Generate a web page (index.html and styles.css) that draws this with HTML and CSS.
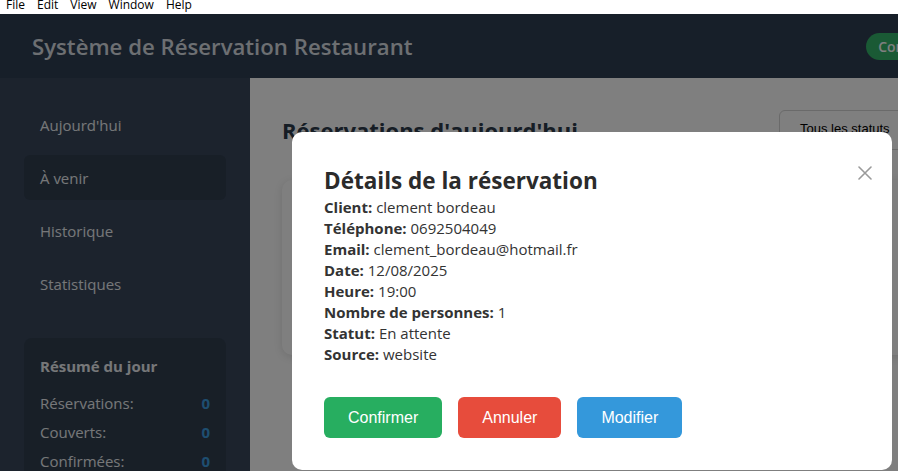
FILE: index.html
```html
<!DOCTYPE html>
<html lang="fr">
<head>
<meta charset="utf-8">
<title>Système de Réservation Restaurant</title>
<link rel="stylesheet" href="styles.css">
</head>
<body>
<div class="menubar">
  <span class="menu-item">File</span>
  <span class="menu-item">Edit</span>
  <span class="menu-item">View</span>
  <span class="menu-item">Window</span>
  <span class="menu-item">Help</span>
</div>
<div class="app">
  <header class="topbar">
    <h1 class="app-title">Système de Réservation Restaurant</h1>
    <div class="topbar-right">
      <span class="status-pill">Connecté</span>
      <span class="topbar-date">12/08/2025</span>
    </div>
  </header>
  <div class="layout">
    <aside class="sidebar">
      <nav class="nav">
        <div class="nav-item">Aujourd'hui</div>
        <div class="nav-item active">À venir</div>
        <div class="nav-item">Historique</div>
        <div class="nav-item">Statistiques</div>
      </nav>
      <section class="summary">
        <h3 class="summary-title">Résumé du jour</h3>
        <div class="summary-row"><span>Réservations:</span><span class="num">0</span></div>
        <div class="summary-row"><span>Couverts:</span><span class="num">0</span></div>
        <div class="summary-row"><span>Confirmées:</span><span class="num">0</span></div>
        <div class="summary-row"><span>En attente:</span><span class="num">0</span></div>
      </section>
    </aside>
    <main class="main">
      <div class="main-head">
        <h2 class="main-title">Réservations d'aujourd'hui</h2>
        <div class="filters">
          <div class="select">Tous les statuts</div>
          <div class="select date">12/08/2025</div>
          <div class="btn-refresh">Actualiser</div>
        </div>
      </div>
      <div class="card">
        <p class="empty">Aucune réservation pour aujourd'hui</p>
      </div>
    </main>
  </div>
</div>
<div class="overlay">
  <div class="modal">
    <div class="modal-head">
      <h2 class="modal-title">Détails de la réservation</h2>
      <svg class="close" width="14" height="14" viewBox="0 0 14 14" aria-hidden="true">
        <path d="M1 1 L13 13 M13 1 L1 13" stroke="#9a9a9a" stroke-width="1.6" stroke-linecap="round"/>
      </svg>
    </div>
    <div class="details">
      <div><b>Client:</b> clement bordeau</div>
      <div><b>Téléphone:</b> 0692504049</div>
      <div><b>Email:</b> clement_bordeau@hotmail.fr</div>
      <div><b>Date:</b> 12/08/2025</div>
      <div><b>Heure:</b> 19:00</div>
      <div><b>Nombre de personnes:</b> 1</div>
      <div><b>Statut:</b> En attente</div>
      <div><b>Source:</b> website</div>
    </div>
    <div class="actions">
      <button class="btn green">Confirmer</button>
      <button class="btn red">Annuler</button>
      <button class="btn blue">Modifier</button>
    </div>
  </div>
</div>
</body>
</html>
```
FILE: styles.css
```css
* { box-sizing: border-box; }
html, body { margin: 0; padding: 0; }
body {
  width: 898px;
  height: 471px;
  overflow: hidden;
  font-family: "Open Sans", "Noto Sans", sans-serif;
  background: #fff;
}
.menubar {
  height: 14px;
  background: #fff;
  display: flex;
  font-size: 12px;
  line-height: 10px;
  color: #000;
  overflow: hidden;
}
.menu-item { padding: 0 6px; }
.app { width: 1184px; }
.topbar {
  height: 64px;
  background: #2f3f52;
  display: flex;
  align-items: center;
  justify-content: space-between;
  padding: 0 32px;
}
.app-title {
  margin: 0;
  font-size: 22.2px;
  font-weight: 600;
  color: #dadfe4;
}
.topbar-right { display: flex; align-items: center; gap: 16px; }
.status-pill {
  background: #34b46a;
  color: #fff;
  font-size: 14px;
  font-weight: 600;
  padding: 4px 12px;
  border-radius: 14px;
  line-height: 19px;
}
.topbar-date { color: #dadfe4; font-size: 14px; width: 182px; }
.layout { display: flex; height: 520px; }
.sidebar {
  width: 250px;
  flex-shrink: 0;
  background: #38465a;
  padding: 24px;
}
.nav { display: flex; flex-direction: column; gap: 8px; margin-bottom: 32px; }
.nav-item {
  height: 45px;
  display: flex;
  align-items: center;
  padding: 0 16px;
  border-radius: 6px;
  color: #eceff2;
  font-size: 15px;
}
.nav-item.active { background: #303e4f; }
.summary {
  background: #303e4f;
  border-radius: 8px;
  padding: 16px;
  color: #eceff2;
}
.summary-title { margin: 0 0 11px; font-size: 15px; font-weight: 700; line-height: 24px; }
.summary-row {
  display: flex;
  justify-content: space-between;
  font-size: 15px;
  line-height: 29px;
}
.num { color: #3c9de0; font-weight: 700; }
.main { flex: 1; background: #fefefe; padding: 32px; }
.main-head { display: flex; justify-content: space-between; align-items: center; height: 40px; margin-bottom: 30px; }
.main-title { margin: 0; font-size: 22px; font-weight: 700; color: #2c3a4a; }
.filters { display: flex; gap: 10px; }
.select {
  height: 40px;
  width: 150px;
  border: 1px solid #d4d4d4;
  border-radius: 6px;
  background: #fff;
  font-family: "Liberation Sans", Arial, sans-serif;
  font-size: 13px;
  padding: 10px 20px;
  color: #000;
}
.select.date { width: 140px; }
.btn-refresh {
  height: 40px;
  width: 63px;
  border-radius: 6px;
  background: #3498db;
}
.card {
  height: 175px;
  background: #fff;
  border-radius: 10px;
  box-shadow: 0 2px 8px rgba(0,0,0,0.12);
  display: flex;
  align-items: center;
  justify-content: center;
}
.empty { color: #7f8c8d; margin: 0; }
.overlay {
  position: fixed;
  top: 14px;
  left: 0;
  width: 1184px;
  height: 574px;
  background: rgba(0,0,0,0.5);
  display: flex;
  align-items: center;
  justify-content: center;
}
.modal {
  width: 600px;
  height: 338px;
  background: #fff;
  border-radius: 10px;
  padding: 32px;
  color: #333;
}
.modal-head { display: flex; justify-content: space-between; align-items: flex-start; }
.modal-title { margin: 0; font-size: 22.5px; font-weight: 700; line-height: 33px; color: #2b2b2b; }
.close { margin-top: 2px; margin-right: -12px; }
.details { font-size: 15px; line-height: 21px; }
.details b { font-weight: 700; }
.actions { display: flex; gap: 16px; margin-top: 32px; }
.btn {
  border: none;
  border-radius: 6px;
  color: #fff;
  font-family: "Liberation Sans", Arial, sans-serif;
  font-size: 16px;
  height: 41px;
  padding: 0 24px;
}
.green { background: #27ae60; }
.red { background: #e74c3c; }
.blue { background: #3498db; }
```
